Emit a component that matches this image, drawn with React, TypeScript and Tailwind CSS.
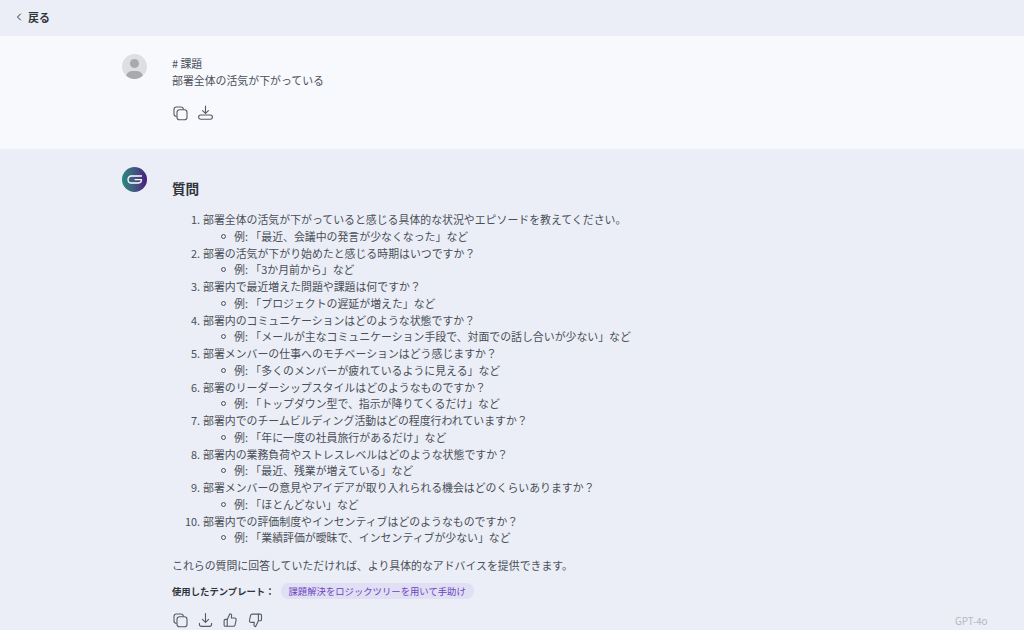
import { ChevronLeft } from "lucide-react";

const questions = [
  ["部署全体の活気が下がっていると感じる具体的な状況やエピソードを教えてください。", "例: 「最近、会議中の発言が少なくなった」など"],
  ["部署の活気が下がり始めたと感じる時期はいつですか？", "例: 「3か月前から」など"],
  ["部署内で最近増えた問題や課題は何ですか？", "例: 「プロジェクトの遅延が増えた」など"],
  ["部署内のコミュニケーションはどのような状態ですか？", "例: 「メールが主なコミュニケーション手段で、対面での話し合いが少ない」など"],
  ["部署メンバーの仕事へのモチベーションはどう感じますか？", "例: 「多くのメンバーが疲れているように見える」など"],
  ["部署のリーダーシップスタイルはどのようなものですか？", "例: 「トップダウン型で、指示が降りてくるだけ」など"],
  ["部署内でのチームビルディング活動はどの程度行われていますか？", "例: 「年に一度の社員旅行があるだけ」など"],
  ["部署内の業務負荷やストレスレベルはどのような状態ですか？", "例: 「最近、残業が増えている」など"],
  ["部署メンバーの意見やアイデアが取り入れられる機会はどのくらいありますか？", "例: 「ほとんどない」など"],
  ["部署内での評価制度やインセンティブはどのようなものですか？", "例: 「業績評価が曖昧で、インセンティブが少ない」など"],
];

function CopyIcon() {
  return (
    <svg width="17" height="17" viewBox="0 0 17 17" fill="none" stroke="#555b66" strokeWidth="1.1" strokeLinecap="round">
      <path d="M4.2 11.4C2.8 11.2 2 10.3 2 9V4.4C2 2.9 2.9 2 4.4 2H9C10.3 2 11.2 2.8 11.4 4.2" />
      <rect x="5" y="4.8" width="10" height="10" rx="2.6" />
    </svg>
  );
}

// the user message uses the closed tray, the answer the open one
function SaveIcon() {
  return (
    <svg width="17" height="17" viewBox="0 0 17 17" fill="none" stroke="#555b66" strokeWidth="1.1" strokeLinecap="round" strokeLinejoin="round">
      <path d="M8.5 1V8.2M5.6 5.6L8.5 8.4L11.4 5.6" />
      <rect x="1.6" y="10" width="13.8" height="4.2" rx="2.1" />
    </svg>
  );
}

function DownloadIcon() {
  return (
    <svg width="17" height="17" viewBox="0 0 17 17" fill="none" stroke="#555b66" strokeWidth="1.1" strokeLinecap="round" strokeLinejoin="round">
      <path d="M8.5 1.5V10.4M5.4 7.4L8.5 10.4L11.6 7.4" />
      <path d="M2.4 11.2V12.2C2.4 13.6 3.2 14.4 4.6 14.4H12.4C13.8 14.4 14.6 13.6 14.6 12.2V11.2" />
    </svg>
  );
}

function ThumbUpIcon() {
  return (
    <svg width="17" height="17" viewBox="0 0 17 17" fill="none" stroke="#555b66" strokeWidth="1.1" strokeLinecap="round" strokeLinejoin="round">
      <path d="M5.2 7.4L7.9 1.8C9.1 1.8 9.8 2.8 9.6 4L9.3 6H12.6C13.7 6 14.4 7 14.1 8L13.1 12.8C12.9 13.7 12.3 14.3 11.4 14.3H5.2V7.4Z" />
      <path d="M5.2 7.4H3.4C2.6 7.4 2.1 7.9 2.1 8.7V13C2.1 13.8 2.6 14.3 3.4 14.3H5.2" />
    </svg>
  );
}

function ThumbDownIcon() {
  return (
    <svg width="17" height="17" viewBox="0 0 17 17" fill="none" stroke="#555b66" strokeWidth="1.1" strokeLinecap="round" strokeLinejoin="round">
      <path d="M11.4 8.8L8.7 14.6C7.5 14.6 6.8 13.6 7 12.4L7.3 10.4H4C2.9 10.4 2.2 9.4 2.5 8.4L3.5 3.6C3.7 2.7 4.3 2.1 5.2 2.1H11.4V8.8Z" />
      <path d="M11.4 8.8H13.2C14 8.8 14.5 8.3 14.5 7.5V3.4C14.5 2.6 14 2.1 13.2 2.1H11.4" />
    </svg>
  );
}

function UserAvatar() {
  return (
    <div className="relative w-[25px] h-[25px] shrink-0 rounded-full bg-[#dedfe2] overflow-hidden">
      <div className="absolute left-[8px] top-[5px] w-[9px] h-[9px] rounded-full bg-[#a9aaad]" />
      <div className="absolute left-[4px] top-[17px] w-[17px] h-[12px] rounded-full bg-[#a9aaad]" />
    </div>
  );
}

function BotAvatar() {
  return (
    <div className="flex items-center justify-center w-[25px] h-[25px] shrink-0 rounded-full bg-gradient-to-r from-[#1f8a7c] to-[#47187f]">
      <svg width="16" height="9" viewBox="0 0 16 9" fill="none" stroke="#ffffff" strokeWidth="1.3" strokeLinecap="round" strokeLinejoin="round">
        <path d="M14.5 1H4.2C2.4 1 1 2.4 1 4.5C1 6.6 2.4 8 4.2 8H11.6C13.4 8 14.5 6.6 14.5 4.6H8" />
      </svg>
    </div>
  );
}

export default function App() {
  return (
    <div className="h-[630px] w-[1024px] overflow-hidden bg-[#ebeef6] text-[10.9px] leading-[16.75px] text-[#4a4f58] font-['Noto_Sans_CJK_JP','Noto_Sans',sans-serif]">
      {/* Header */}
      <div className="flex items-center h-[36px] pl-[13px] gap-[3px] text-[#30343b] font-bold -translate-y-[1px]">
        <ChevronLeft className="w-[12px] h-[12px]" strokeWidth={2} />
        <span>戻る</span>
      </div>

      {/* User message */}
      <div className="flex gap-[25px] h-[113px] pl-[122px] pt-[18px] bg-[#f8f9fd]">
        <UserAvatar />
        <div className="pt-[1px]">
          <p># 課題</p>
          <p>部署全体の活気が下がっている</p>
          <div className="flex gap-[8px] mt-[16px]">
            <CopyIcon />
            <SaveIcon />
          </div>
        </div>
      </div>

      {/* Answer */}
      <div className="relative flex gap-[25px] pl-[122px] pt-[18px]">
        <BotAvatar />
        <div className="w-[480px]">
          <h2 className="mt-[13px] mb-[14px] text-[13.6px] leading-[17px] font-bold text-[#30343b]">質問</h2>
          <ol className="pl-[31px] whitespace-nowrap">
            {questions.map(([q, ex], i) => (
              <li key={q} className="relative">
                <span className="absolute right-full mr-[3px]">{i + 1}.</span>
                {q}
                <div className="relative pl-[31px]">
                  <span className="absolute left-[18px] top-[6px] w-[5px] h-[5px] rounded-full border border-[#4a4f58]" />
                  {ex}
                </div>
              </li>
            ))}
          </ol>
          <p className="mt-[11px]">これらの質問に回答していただければ、より具体的なアドバイスを提供できます。</p>
          <div className="flex items-center mt-[9px]">
            <span className="text-[9.35px] font-bold text-[#30343b]">使用したテンプレート：</span>
            <span className="ml-[6px] px-[8px] h-[16px] flex items-center rounded-full bg-[#e0dff3] text-[9.35px] text-[#6d45c0]">
              課題解決をロジックツリーを用いて手助け
            </span>
          </div>
          <div className="flex gap-[8px] mt-[12px]">
            <CopyIcon />
            <DownloadIcon />
            <ThumbUpIcon />
            <ThumbDownIcon />
          </div>
        </div>
        <span className="absolute left-[955px] top-[464px] text-[9.8px] text-[#b5b8be]">GPT-4o</span>
      </div>
    </div>
  );
}
